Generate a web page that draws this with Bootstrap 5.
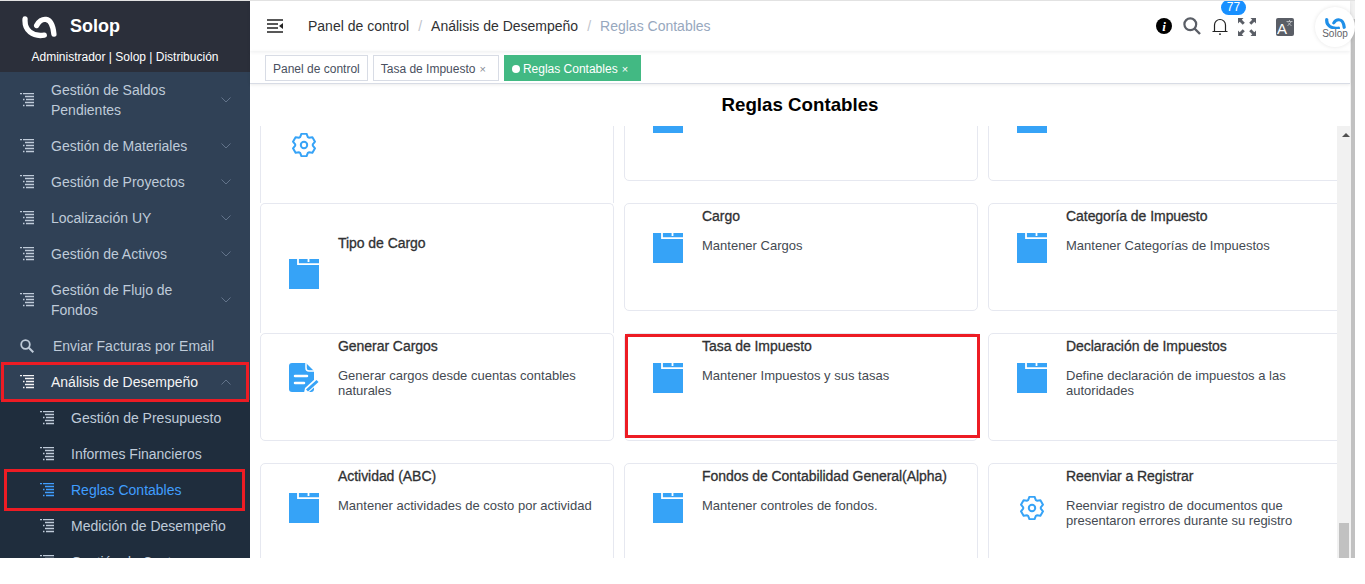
<!DOCTYPE html>
<html lang="es">
<head>
    <meta charset="UTF-8">
    <meta name="viewport" content="width=device-width, initial-scale=1">
    <title>Reglas Contables</title>
    <link href="https://cdn.jsdelivr.net/npm/bootstrap@5.3.0/dist/css/bootstrap.min.css" rel="stylesheet">
    <style>
        body { font-family: "Liberation Sans", Arial, sans-serif; background: #fff; overflow: hidden; }
        .marco { width: 1355px; height: 558px; overflow: hidden; border-top: 1px solid #e2e2e2; }

        /* menu lateral */
        .lateral { width: 250px; background: #304156; flex: none; overflow: hidden; }
        .lateral > * { flex: none; }
        .cabecera-lat { height: 71px; background: #2b2f3a; color: #fff; }
        .marca { height: 47px; padding-left: 22px; gap: 13px; font-size: 18px; font-weight: 700; padding-top: 3px; }
        .perfil { font-size: 12px; text-align: center; line-height: 14px; padding-top: 2px; }
        .fila-menu { min-height: 36px; padding: 8px 19px 8px 20px; font-size: 14px; line-height: 20px; color: #bfcbd9; gap: 17px; }
        .fila-menu .texto-menu { flex: 1; }
        .fila-menu.abierta { color: #f4f4f5; }
        .fila-menu .flecha { width: 10px; height: 6px; flex: none; }
        .ico-arbol { width: 14px; height: 14px; flex: none; }
        .con-lupa { gap: 19px; }
        .submenu { background: #1f2d3d; }
        .submenu .fila-menu { padding-left: 40px; }
        .submenu .activa { color: #409eff; }
        .marca-roja { position: absolute; border: 3px solid #ed1c24; pointer-events: none; }
        .roja-padre { top: -2px; bottom: -2px; left: 1px; right: 1px; }
        .roja-hijo { top: -3px; bottom: -3px; left: 4px; right: 5px; }
        .roja-tarjeta { top: 0; bottom: 2px; left: 0; right: -3px; }

        /* barra superior */
        .contenido { width: 1100px; flex: none; }
        .barra-top { height: 50px; flex: none; padding-left: 17px; box-shadow: 0 1px 4px rgba(0,21,41,.08); position: relative; z-index: 2; }
        .barra-top .breadcrumb { font-size: 14px; --bs-breadcrumb-margin-bottom: 0; --bs-breadcrumb-divider-color: #c0c4cc; --bs-breadcrumb-item-padding-x: 9px; margin-left: 25px; }
        .barra-top .breadcrumb a { color: #303133; text-decoration: none; }
        .barra-top .breadcrumb-item.active { color: #97a8be; }
        .iconos-top { position: relative; width: 205px; height: 50px; margin-right: -5px; flex: none; }
        .ico-top { position: absolute; }
        .aviso { position: absolute; left: 71px; top: -1px; width: 25px; height: 15px; padding: 0; border-radius: 8px; font-size: 12px; font-weight: 400; line-height: 15px; background: #1890ff; }
        .avatar-sol { position: absolute; right: 0; top: 6px; width: 40px; height: 40px; border-radius: 50%; box-shadow: 0 0 4px rgba(0,0,0,.1); background: #fff; text-align: center; color: #5f6368; font-size: 10px; line-height: 10px; padding-top: 10px; }

        /* etiquetas */
        .barra-tags { height: 33px; flex: none; padding: 4px 0 0 15px; gap: 5px; border-bottom: 1px solid #d8dce5; box-shadow: 0 1px 3px rgba(0,0,0,.08); position: relative; z-index: 1; }
        .etiqueta { height: 26px; line-height: 27px; padding: 0 7px; font-size: 12px; color: #495060; border: 1px solid #d8dce5; background: #fff; white-space: nowrap; }
        .etiqueta.con-x { padding-right: 12px; }
        .etiqueta.viva { background: #42b983; border-color: #42b983; color: #fff; }
        .punto { display: inline-block; width: 8px; height: 8px; border-radius: 50%; background: #fff; margin-right: 3px; vertical-align: 0; }
        .cerrar { font-size: 11px; margin-left: 4px; opacity: .65; }
        .viva .cerrar { opacity: 1; }

        .titulo-pag { height: 41px; flex: none; font-size: 18.72px; font-weight: 700; line-height: 41px; color: #000; margin: 0 0 1px; text-align: center; }

        /* tarjetas */
        .zona-tarjetas { flex: 1; min-height: 0; overflow: hidden; }
        .visor { width: 1087px; flex: none; overflow: hidden; }
        .rejilla { display: grid; grid-template-columns: repeat(3, 354px); grid-auto-rows: 130px; column-gap: 10px; margin: -53px 0 0 10px; width: 1082px; }
        .tarjeta-f { height: 108px; position: relative; border: 1px solid #e6e8f0; border-radius: 5px; background: #fff; }
        .tarjeta-f.alta { height: 130px; border-bottom: 0; border-bottom-left-radius: 0; border-bottom-right-radius: 0; }
        .hueco-ico { position: absolute; left: 28px; top: 29px; width: 30px; height: 30px; }
        .alta .hueco-ico { top: 55px; }
        .hueco-ico.con-engrane { padding: 3px; }
        .alta .hueco-ico.con-engrane { padding: 4px 3px 2px; }
        .nombre { position: absolute; left: 77px; top: 3px; font-size: 14px; line-height: 18px; font-weight: 400; letter-spacing: -.05px; -webkit-text-stroke: .3px #303133; color: #303133; margin: 0; }
        .alta .nombre { top: 30px; }
        .detalle { position: absolute; left: 77px; top: 34px; right: 10px; font-size: 13px; line-height: 15px; color: #444a52; margin: 0; }

        /* barras de scroll */
        .scroll-int { width: 13px; flex: none; background: #f1f1f1; position: relative; }
        .scroll-int .tope { flex: 1; }
        .scroll-int .pulgar { width: 10px; height: 35px; background: #c1c1c1; margin-left: 2px; flex: none; }
        .flecha-scroll { width: 0; height: 0; border-left: 4px solid transparent; border-right: 4px solid transparent; border-bottom: 4px solid #505050; margin: 7px 0 0 5px; flex: none; }
        .scroll-ext { width: 5px; flex: none; background: #f1f1f1; }
        .scroll-ext div { margin: 18px 0 0 1px; height: 600px; background: #c1c1c1; }
    </style>
</head>
<body>
    <svg width="0" height="0" class="position-absolute">
        <symbol id="i-arbol" viewBox="0 0 14 14">
            <path d="M0 .5h2M3 .5h11M5 3.5h9M3 6.5h1.5M6 6.5h8M5 9.5h9M3 12.5h1.5M6 12.5h8" stroke="currentColor" stroke-width="1.3" fill="none"/>
        </symbol>
        <symbol id="i-abajo" viewBox="0 0 10 6">
            <path d="M.5 .5 5 5l4.5-4.5" stroke="#62738a" fill="none"/>
        </symbol>
        <symbol id="i-carpeta" viewBox="0 0 30 30">
            <rect width="30" height="30" fill="#36a3f7"/>
            <path d="M9 0v5.2h21M19.500 0v3" stroke="#fff" stroke-width="1.800" fill="none"/>
        </symbol>
        <symbol id="i-engrane" viewBox="0 0 24 24">
            <path d="M8.14 4.09 9.41.8h5.18l1.27 3.29 1.06.61 3.49-.54 2.59 4.48-2.22 2.75v1.22L23 15.36l-2.59 4.48-3.49-.54-1.06.61-1.27 3.29H9.41l-1.27-3.29-1.06-.61-3.49.54L1 15.36l2.22-2.75v-1.22L1 8.64l2.59-4.48 3.49.54z" stroke="#36a3f7" stroke-width="2" stroke-linejoin="round" fill="none"/>
            <circle cx="12" cy="12" r="3.2" stroke="#36a3f7" stroke-width="2" fill="none"/>
        </symbol>
        <symbol id="i-logo" viewBox="0 0 36 26">
            <path d="M3 5C2 17 11 24 23 22" stroke="currentColor" stroke-width="5.5" stroke-linecap="round" fill="none"/>
            <path d="M15 12C19 4 31 0 33 21" stroke="currentColor" stroke-width="5.5" stroke-linecap="round" fill="none"/>
        </symbol>
    </svg>

    <div class="marco d-flex">
        <aside class="lateral d-flex flex-column">
            <div class="cabecera-lat">
                <div class="marca d-flex align-items-center">
                    <svg width="35" height="25"><use href="#i-logo"/></svg>
                    <span>Solop</span>
                </div>
                <div class="perfil">Administrador | Solop | Distribución</div>
            </div>
            <div class="fila-menu d-flex align-items-center">
                <svg class="ico-arbol"><use href="#i-arbol"/></svg>
                <span class="texto-menu">Gestión de Saldos<br>Pendientes</span>
                <svg class="flecha"><use href="#i-abajo"/></svg>
            </div>
            <div class="fila-menu d-flex align-items-center">
                <svg class="ico-arbol"><use href="#i-arbol"/></svg>
                <span class="texto-menu">Gestión de Materiales</span>
                <svg class="flecha"><use href="#i-abajo"/></svg>
            </div>
            <div class="fila-menu d-flex align-items-center">
                <svg class="ico-arbol"><use href="#i-arbol"/></svg>
                <span class="texto-menu">Gestión de Proyectos</span>
                <svg class="flecha"><use href="#i-abajo"/></svg>
            </div>
            <div class="fila-menu d-flex align-items-center">
                <svg class="ico-arbol"><use href="#i-arbol"/></svg>
                <span class="texto-menu">Localización UY</span>
                <svg class="flecha"><use href="#i-abajo"/></svg>
            </div>
            <div class="fila-menu d-flex align-items-center">
                <svg class="ico-arbol"><use href="#i-arbol"/></svg>
                <span class="texto-menu">Gestión de Activos</span>
                <svg class="flecha"><use href="#i-abajo"/></svg>
            </div>
            <div class="fila-menu d-flex align-items-center">
                <svg class="ico-arbol"><use href="#i-arbol"/></svg>
                <span class="texto-menu">Gestión de Flujo de<br>Fondos</span>
                <svg class="flecha"><use href="#i-abajo"/></svg>
            </div>
            <div class="fila-menu con-lupa d-flex align-items-center">
                <svg class="ico-arbol" viewBox="0 0 14 14"><circle cx="5.5" cy="5.5" r="4.3" stroke="currentColor" stroke-width="1.8" fill="none"/><path d="m8.8 8.8 4.5 4.5" stroke="currentColor" stroke-width="2"/></svg>
                <span class="texto-menu">Enviar Facturas por Email</span>
            </div>
            <div class="fila-menu abierta d-flex align-items-center position-relative">
                <svg class="ico-arbol"><use href="#i-arbol"/></svg>
                <span class="texto-menu">Análisis de Desempeño</span>
                <svg class="flecha" viewBox="0 0 10 6"><path d="M.5 5.5 5 1l4.5 4.5" stroke="#62738a" fill="none"/></svg>
                <span class="marca-roja roja-padre"></span>
            </div>
            <div class="submenu flex-grow-1">
                <div class="fila-menu d-flex align-items-center">
                    <svg class="ico-arbol"><use href="#i-arbol"/></svg>
                    <span class="texto-menu">Gestión de Presupuesto</span>
                </div>
                <div class="fila-menu d-flex align-items-center">
                    <svg class="ico-arbol"><use href="#i-arbol"/></svg>
                    <span class="texto-menu">Informes Financieros</span>
                </div>
                <div class="fila-menu activa d-flex align-items-center position-relative">
                    <svg class="ico-arbol"><use href="#i-arbol"/></svg>
                    <span class="texto-menu">Reglas Contables</span>
                    <span class="marca-roja roja-hijo"></span>
                </div>
                <div class="fila-menu d-flex align-items-center">
                    <svg class="ico-arbol"><use href="#i-arbol"/></svg>
                    <span class="texto-menu">Medición de Desempeño</span>
                </div>
                <div class="fila-menu d-flex align-items-center">
                    <svg class="ico-arbol"><use href="#i-arbol"/></svg>
                    <span class="texto-menu">Gestión de Costos</span>
                </div>
            </div>
        </aside>

        <div class="d-flex flex-grow-1" style="min-width:0">
            <main class="contenido d-flex flex-column">
                <div class="barra-top d-flex align-items-center">
                    <svg width="16" height="14" viewBox="0 0 16 14"><path d="M0 1h16M0 5h11M0 9h11M0 13h16" stroke="#222" stroke-width="1.6"/><path d="M16 4v6l-4-3z" fill="#222"/></svg>
                    <nav class="flex-grow-1">
                        <ol class="breadcrumb">
                            <li class="breadcrumb-item"><a href="#">Panel de control</a></li>
                            <li class="breadcrumb-item"><a href="#">Análisis de Desempeño</a></li>
                            <li class="breadcrumb-item active">Reglas Contables</li>
                        </ol>
                    </nav>
                    <div class="iconos-top">
                        <svg class="ico-top" style="left:6px;top:17px" width="16" height="16" viewBox="0 0 16 16"><circle cx="8" cy="8" r="8" fill="#000"/><text x="8" y="13" text-anchor="middle" fill="#fff" font-family="Liberation Serif" font-weight="700" font-style="italic" font-size="13">i</text></svg>
                        <svg class="ico-top" style="left:33px;top:16px" width="18" height="18" viewBox="0 0 18 18"><circle cx="7.3" cy="7.3" r="5.9" stroke="#5a5e66" stroke-width="2.2" fill="none"/><path d="m11.5 11.5 5.5 5.5" stroke="#5a5e66" stroke-width="2.4"/></svg>
                        <svg class="ico-top" style="left:62px;top:17px" width="16" height="17" viewBox="0 0 16 17"><path d="M.5 13.5h15M2.5 13.5V7a5.5 5.5 0 0 1 11 0v6.500" stroke="#222" stroke-width="1.2" fill="none"/><path d="M7 15.500h2v1.300H7z" fill="#222"/></svg>
                        <span class="badge aviso">77</span>
                        <svg class="ico-top" style="left:88px;top:17px" width="18" height="18" viewBox="0 0 18 18"><path d="M0 0h5.500L3.800 1.700l3 3-2.100 2.100-3-3L0 5.500zM18 0v5.500l-1.700-1.700-3 3-2.100-2.100 3-3L12.500 0zM0 18v-5.500l1.700 1.700 3-3 2.100 2.100-3 3L5.500 18zM18 18h-5.500l1.700-1.700-3-3 2.100-2.100 3 3 1.700-1.700z" fill="#5a5e66"/></svg>
                        <svg class="ico-top" style="left:126px;top:17px" width="18" height="18" viewBox="0 0 18 18"><rect width="18" height="18" rx="2" fill="#5a5e66"/><text x="1" y="16" fill="#fff" font-family="Liberation Sans" font-size="15">A</text><path d="M10.500 3.500h6M13.500 2v1.500M11.500 8l4-4.500M15.500 8l-3.500-3.500" stroke="#c8cacd" stroke-width=".8" fill="none"/></svg>
                        <div class="avatar-sol">
                            <svg class="d-block mx-auto" style="color:#1f8fe8" width="21" height="12" viewBox="0 0 36 24" preserveAspectRatio="none"><use href="#i-logo" width="36" height="26"/></svg>
                            Solop
                        </div>
                    </div>
                </div>

                <div class="barra-tags d-flex">
                    <span class="etiqueta">Panel de control</span>
                    <span class="etiqueta con-x">Tasa de Impuesto<span class="cerrar">×</span></span>
                    <span class="etiqueta con-x viva"><span class="punto"></span>Reglas Contables<span class="cerrar">×</span></span>
                </div>

                <h1 class="titulo-pag">Reglas Contables</h1>

                <div class="zona-tarjetas d-flex">
                    <div class="visor">
                        <div class="rejilla">
                            <div class="tarjeta-f alta">
                                <svg class="hueco-ico con-engrane" viewBox="0 0 24 24"><use href="#i-engrane"/></svg>
                            </div>
                            <div class="tarjeta-f">
                                <svg class="hueco-ico"><use href="#i-carpeta"/></svg>
                            </div>
                            <div class="tarjeta-f">
                                <svg class="hueco-ico"><use href="#i-carpeta"/></svg>
                            </div>

                            <div class="tarjeta-f alta">
                                <svg class="hueco-ico"><use href="#i-carpeta"/></svg>
                                <p class="nombre">Tipo de Cargo</p>
                            </div>
                            <div class="tarjeta-f">
                                <svg class="hueco-ico"><use href="#i-carpeta"/></svg>
                                <p class="nombre">Cargo</p>
                                <p class="detalle">Mantener Cargos</p>
                            </div>
                            <div class="tarjeta-f">
                                <svg class="hueco-ico"><use href="#i-carpeta"/></svg>
                                <p class="nombre">Categoría de Impuesto</p>
                                <p class="detalle">Mantener Categorías de Impuestos</p>
                            </div>

                            <div class="tarjeta-f">
                                <svg class="hueco-ico" viewBox="0 0 30 30"><path d="M3 0h14l8 8v18a3 3 0 0 1-3 3H3a3 3 0 0 1-3-3V3a3 3 0 0 1 3-3z" fill="#36a3f7"/><path d="M17 0v5a3 3 0 0 0 3 3h5" stroke="#fff" stroke-width="1.500" fill="none"/><path d="M6 13h12M6 20h9" stroke="#fff" stroke-width="2.500" stroke-linecap="round"/><path d="M15 30l1-5 10-9 4 4-10 9z" fill="#fff"/><path d="M18 27.500 28.500 18" stroke="#36a3f7" stroke-width="3"/></svg>
                                <p class="nombre">Generar Cargos</p>
                                <p class="detalle">Generar cargos desde cuentas contables naturales</p>
                            </div>
                            <div class="tarjeta-f">
                                <svg class="hueco-ico"><use href="#i-carpeta"/></svg>
                                <p class="nombre">Tasa de Impuesto</p>
                                <p class="detalle">Mantener Impuestos y sus tasas</p>
                                <span class="marca-roja roja-tarjeta"></span>
                            </div>
                            <div class="tarjeta-f">
                                <svg class="hueco-ico"><use href="#i-carpeta"/></svg>
                                <p class="nombre">Declaración de Impuestos</p>
                                <p class="detalle">Define declaración de impuestos a las autoridades</p>
                            </div>

                            <div class="tarjeta-f">
                                <svg class="hueco-ico"><use href="#i-carpeta"/></svg>
                                <p class="nombre">Actividad (ABC)</p>
                                <p class="detalle">Mantener actividades de costo por actividad</p>
                            </div>
                            <div class="tarjeta-f">
                                <svg class="hueco-ico"><use href="#i-carpeta"/></svg>
                                <p class="nombre">Fondos de Contabilidad General(Alpha)</p>
                                <p class="detalle">Mantener controles de fondos.</p>
                            </div>
                            <div class="tarjeta-f">
                                <svg class="hueco-ico con-engrane" viewBox="0 0 24 24"><use href="#i-engrane"/></svg>
                                <p class="nombre">Reenviar a Registrar</p>
                                <p class="detalle">Reenviar registro de documentos que presentaron errores durante su registro</p>
                            </div>
                        </div>
                    </div>
                    <div class="scroll-int d-flex flex-column">
                        <div class="flecha-scroll"></div>
                        <div class="tope"></div>
                        <div class="pulgar"></div>
                    </div>
                </div>
            </main>
            <div class="scroll-ext"><div></div></div>
        </div>
    </div>

    <script src="https://cdn.jsdelivr.net/npm/bootstrap@5.3.0/dist/js/bootstrap.bundle.min.js"></script>
</body>
</html>
